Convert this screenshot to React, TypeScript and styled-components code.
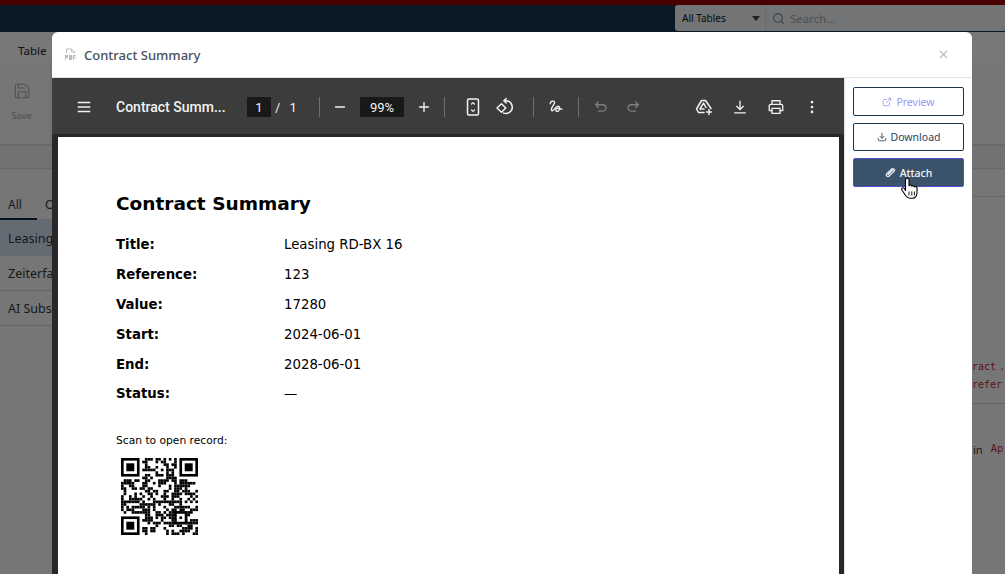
import React, { FC } from 'react';
import styled, { createGlobalStyle } from 'styled-components';
import { ExternalLink, Download, Search, Save, X } from 'lucide-react';

const GlobalStyle = createGlobalStyle`
    html, body {
        margin: 0;
        padding: 0;
        background: #fff;
    }
    * {
        box-sizing: border-box;
    }
`;

const UI_FONT = `"Noto Sans", "Open Sans", sans-serif`;

const Page = styled.div`
    position: relative;
    width: 1005px;
    height: 574px;
    overflow: hidden;
    font-family: ${UI_FONT};
    background: #fbfbfb;
    color: #1d2733;
`;

// Application behind the dialog
const AlertStripe = styled.div`
    height: 5px;
    background: #9c0000;
`;

const NavBar = styled.div`
    height: 27px;
    background: #153650;
    display: flex;
    justify-content: flex-end;
`;

const SearchGroup = styled.div`
    width: 330px;
    height: 26px;
    background: #f2f7fb;
    border-radius: 3px 0 0 3px;
    display: flex;
    align-items: center;
`;

const TableSelect = styled.div`
    width: 91px;
    height: 100%;
    padding: 0 5px 0 7px;
    display: flex;
    align-items: center;
    justify-content: space-between;
    font-size: 10px;
    border-right: 1px solid #dfe4e8;
    color: #101820;
`;

const Caret = styled.span`
    border-left: 4px solid transparent;
    border-right: 4px solid transparent;
    border-top: 5px solid #444;
`;

const SearchHint = styled.span`
    margin-left: 5px;
    font-size: 11.5px;
    color: #a3aab0;
`;

const SearchGlyph = styled.span`
    display: flex;
    margin-left: 6px;
    color: #7d858c;
`;

const MenuBar = styled.div`
    height: 30px;
    padding: 11px 18px 0;
    font-size: 11.5px;
    line-height: 16px;
    background: #fff;
`;

const Ribbon = styled.div`
    height: 84px;
    background: #fbfbfb;
    border-bottom: 2px solid #e2e2e2;
    display: flex;
`;

const RibbonButton = styled.div`
    width: 51px;
    padding: 20px 7px 0 0;
    border-right: 1px solid #e8e8e8;
    display: flex;
    flex-direction: column;
    align-items: center;
    gap: 9px;
    font-size: 9.5px;
    color: #a9a9a9;
`;

const FilterStrip = styled.div`
    height: 23px;
    background: #f2f2f2;
    border-bottom: 1px solid #dedede;
`;

const Workspace = styled.div`
    display: flex;
`;

const ListColumn = styled.div`
    width: 340px;
    padding-top: 23px;
`;

const TabRow = styled.div`
    display: flex;
    height: 28px;
    border-bottom: 1px solid #e2e2e2;
    font-size: 12px;
`;

const Tab = styled.div<{ $active?: boolean }>`
    width: 37px;
    padding: 4px 8px 0;
    color: #2b3a4a;
    border-bottom: ${(p) => (p.$active ? '2px solid #0f2a44' : 'none')};
    height: 28px;
`;

const ListRow = styled.div<{ $active?: boolean }>`
    height: ${(p) => (p.$active ? 36 : 35)}px;
    padding: 0 8px;
    display: flex;
    align-items: center;
    font-size: 12.5px;
    white-space: nowrap;
    background: ${(p) => (p.$active ? '#d5e4f4' : 'transparent')};
    border-bottom: ${(p) => (p.$active ? 'none' : '1px solid #d6d6d6')};
    color: #2c3742;
`;

const DetailColumn = styled.div`
    flex: 1;
    border-top: 1px solid #dcdcdc;
    margin-top: 27px;
    padding: 161px 0 0 632px;
    overflow: hidden;
    white-space: nowrap;
`;

const CodeLine = styled.div`
    height: 18px;
    font-family: "DejaVu Sans Mono", monospace;
    font-size: 10px;
    line-height: 18px;
    word-spacing: -3px;
    color: #c7254e;
`;

const DetailRule = styled.div`
    margin: 9px 0 38px -632px;
    border-top: 1px solid #d0d0d0;
`;

const InlineNote = styled.div`
    padding-left: 1px;
    font-size: 11px;
    color: #333;
    display: flex;
    gap: 8px;

    span {
        color: #c7254e;
        font-family: "DejaVu Sans Mono", monospace;
        font-size: 10.5px;
    }
`;

const Backdrop = styled.div`
    position: absolute;
    inset: 0;
    background: rgba(0, 0, 0, 0.53);
`;

// Dialog
const Dialog = styled.div`
    position: absolute;
    left: 52px;
    top: 32px;
    width: 920px;
    height: 542px;
    background: #fff;
    border-radius: 6px 6px 0 0;
    display: flex;
    flex-direction: column;
    overflow: hidden;
`;

const DialogHeader = styled.div`
    height: 46px;
    flex-shrink: 0;
    padding: 0 22px 0 13px;
    display: flex;
    align-items: center;
    border-bottom: 1px solid #dee2e6;
`;

const DialogTitle = styled.div`
    flex: 1;
    margin-left: 8px;
    font-size: 13px;
    font-weight: 500;
    color: #47505c;
`;

const CloseGlyph = styled.span`
    display: flex;
    color: #b4bac2;
`;

const DialogBody = styled.div`
    flex: 1;
    display: flex;
    min-height: 0;
`;

const Viewer = styled.div`
    width: 792px;
    background: #282828;
    display: flex;
    flex-direction: column;
`;

const Toolbar = styled.div`
    height: 56px;
    flex-shrink: 0;
    padding: 2px 0 0 16px;
    background: #3c3c3c;
    display: flex;
    align-items: center;
    color: #f1f1f1;
    font-family: Roboto, sans-serif;
`;

const ToolButton = styled.div<{ $width?: number; $dim?: boolean }>`
    width: ${(p) => p.$width ?? 32}px;
    height: 32px;
    flex-shrink: 0;
    display: flex;
    align-items: center;
    justify-content: center;
    color: ${(p) => (p.$dim ? '#7c7c7c' : '#f1f1f1')};
`;

const DocName = styled.div`
    width: 110px;
    margin: 0 21px 0 16px;
    font-size: 14px;
    font-weight: 500;
    white-space: nowrap;
`;

const NumberField = styled.div<{ $width: number }>`
    width: ${(p) => p.$width}px;
    height: 20px;
    background: #191919;
    display: flex;
    align-items: center;
    justify-content: center;
    font-size: 13px;
`;

const PageOf = styled.div`
    width: 48px;
    padding-left: 4px;
    display: flex;
    gap: 9px;
    font-size: 13px;
`;

const ToolDivider = styled.div<{ $left?: number; $right?: number }>`
    width: 1px;
    height: 20px;
    flex-shrink: 0;
    background: #6e6e6e;
    margin: 0 ${(p) => p.$right ?? 0}px 0 ${(p) => p.$left ?? 0}px;
`;

const ToolSpacer = styled.div`
    flex: 1;
`;

const Sheet = styled.div`
    flex: 1;
    margin: 3px 5px 0 6px;
    padding: 55px 58px 0;
    background: #fff;
    color: #000;
    font-family: "DejaVu Sans", sans-serif;
`;

const SheetTitle = styled.div`
    font-size: 18.5px;
    font-weight: 700;
    line-height: 24px;
    margin-bottom: 20px;
`;

const FieldRow = styled.div`
    display: grid;
    grid-template-columns: 168px 1fr;
    height: 29.9px;
    font-size: 13.3px;
    line-height: 18px;

    b {
        font-weight: 700;
    }
`;

const ScanLabel = styled.div`
    margin-top: 19px;
    font-size: 10.7px;
    line-height: 14px;
`;

const QrBox = styled.div`
    margin: 10px 0 0 5px;
    width: 77px;
    height: 77px;
    filter: blur(0.35px);
`;

const ActionColumn = styled.div`
    flex: 1;
    padding: 9px 8px 0;
    border-left: 1px solid #dee2e6;
    display: flex;
    flex-direction: column;
    gap: 7px;
`;

const ActionButton = styled.div<{ $variant: 'muted' | 'outline' | 'solid'; $height: number }>`
    height: ${(p) => p.$height}px;
    border-radius: 2px;
    border: 1px solid ${(p) => (p.$variant === 'solid' ? '#4f4fd0' : '#1a3350')};
    background: ${(p) => (p.$variant === 'solid' ? '#3a536b' : '#fff')};
    color: ${(p) =>
        p.$variant === 'muted' ? '#9a97f2' : p.$variant === 'solid' ? '#f4f6f8' : '#2b4560'};
    display: flex;
    align-items: center;
    justify-content: center;
    gap: 4px;
    font-size: 10.5px;
    font-weight: ${(p) => (p.$variant === 'solid' ? 500 : 400)};
`;

const HandCursor = styled.svg`
    position: absolute;
    left: 901px;
    top: 177px;
`;

const FieldData: [string, string][] = [
    ['Title:', 'Leasing RD-BX 16'],
    ['Reference:', '123'],
    ['Value:', '17280'],
    ['Start:', '2024-06-01'],
    ['End:', '2028-06-01'],
    ['Status:', '—'],
];

const PdfGlyph: FC = () => (
    <svg width="11" height="13" viewBox="0 0 11 13" fill="none">
        <path d="M1.5 5V1h5l3 3v1" stroke="#b5b9be" strokeWidth="1" />
        <path d="M6.5 1v3h3" stroke="#b5b9be" strokeWidth="0.8" />
        <path d="M0 7h3v3H1v2H0zM4 7h2.5l.8 1v3l-.8 1H4zM8 7h3v1.2H9v1h2v1H9V12H8z" fill="#b8bcc1" />
    </svg>
);

const TIcon: FC<{ children: React.ReactNode; size?: number }> = ({ children, size = 18 }) => (
    <svg width={size} height={size} viewBox="0 0 20 20" fill="none" stroke="currentColor" strokeWidth="1.5" strokeLinecap="round" strokeLinejoin="round">
        {children}
    </svg>
);

const PaperClip: FC = () => (
    <svg width="11" height="11" viewBox="0 0 12 12" fill="none" stroke="#dfe3e7" strokeWidth="1.4" strokeLinecap="round">
        <path d="M7.8 1.6 2 7.4a1.8 1.8 0 0 0 2.600 2.600l5.600-5.700a1.100 1.100 0 0 0-1.700-1.600L3.600 7.600" />
        <path d="M9.600 2.200 3.400 8.600" />
    </svg>
);

// Not a scannable code, just the look of one
const QrCode: FC = () => {
    const n = 29;
    const cells: React.ReactNode[] = [];
    const inFinder = (x: number, y: number) =>
        (x < 8 && y < 8) || (x > n - 9 && y < 8) || (x < 8 && y > n - 9);
    const finder = (ox: number, oy: number) => (
        <g key={`${ox}-${oy}`}>
            <rect x={ox} y={oy} width="7" height="7" />
            <rect x={ox + 1} y={oy + 1} width="5" height="5" fill="#fff" />
            <rect x={ox + 2} y={oy + 2} width="3" height="3" />
        </g>
    );
    for (let y = 0; y < n; y++) {
        for (let x = 0; x < n; x++) {
            if (inFinder(x, y)) continue;
            const h = Math.sin(x * 12.9898 + y * 78.233 + x * y * 0.37) * 43758.5453;
            if (h - Math.floor(h) > 0.48) {
                cells.push(<rect key={`${x}.${y}`} x={x} y={y} width="1" height="1" />);
            }
        }
    }
    return (
        <svg width="77" height="77" viewBox="0 0 29 29" fill="#000">
            {cells}
            {finder(0, 0)}
            {finder(22, 0)}
            {finder(0, 22)}
            <rect x="20" y="20" width="5" height="5" />
            <rect x="21" y="21" width="3" height="3" fill="#fff" />
            <rect x="22" y="22" width="1" height="1" />
        </svg>
    );
};

export default function App() {
    return (
        <Page>
            <GlobalStyle />
            <AlertStripe />
            <NavBar>
                <SearchGroup>
                    <TableSelect>
                        All Tables
                        <Caret />
                    </TableSelect>
                    <SearchGlyph>
                        <Search size={13} />
                    </SearchGlyph>
                    <SearchHint>Search...</SearchHint>
                </SearchGroup>
            </NavBar>
            <MenuBar>Table</MenuBar>
            <Ribbon>
                <RibbonButton>
                    <Save size={18} strokeWidth={1.5} />
                    Save
                </RibbonButton>
            </Ribbon>
            <FilterStrip />
            <Workspace>
                <ListColumn>
                    <TabRow>
                        <Tab $active>All</Tab>
                        <Tab>Open</Tab>
                    </TabRow>
                    <ListRow $active>Leasing RD-BX 16</ListRow>
                    <ListRow>Zeiterfassung</ListRow>
                    <ListRow>AI Subscription</ListRow>
                </ListColumn>
                <DetailColumn>
                    <CodeLine>ract .</CodeLine>
                    <CodeLine>refer</CodeLine>
                    <DetailRule />
                    <InlineNote>
                        in <span>Ap</span>
                    </InlineNote>
                </DetailColumn>
            </Workspace>
            <Backdrop />
            <Dialog>
                <DialogHeader>
                    <PdfGlyph />
                    <DialogTitle>Contract Summary</DialogTitle>
                    <CloseGlyph>
                        <X size={13} />
                    </CloseGlyph>
                </DialogHeader>
                <DialogBody>
                    <Viewer>
                        <Toolbar>
                            <ToolButton>
                                <TIcon>
                                    <path d="M3 5h14M3 10h14M3 15h14" strokeLinecap="butt" />
                                </TIcon>
                            </ToolButton>
                            <DocName>Contract Summ...</DocName>
                            <NumberField $width={24}>1</NumberField>
                            <PageOf>
                                <span>/</span>
                                <span>1</span>
                            </PageOf>
                            <ToolDivider $right={4} />
                            <ToolButton>
                                <TIcon>
                                    <path d="M4.5 10h11" strokeLinecap="butt" />
                                </TIcon>
                            </ToolButton>
                            <ToolButton $width={4} />
                            <NumberField $width={44}>99%</NumberField>
                            <ToolButton $width={4} />
                            <ToolButton>
                                <TIcon>
                                    <path d="M4.5 10h11M10 4.5v11" strokeLinecap="butt" />
                                </TIcon>
                            </ToolButton>
                            <ToolDivider $left={4} $right={12} />
                            <ToolButton>
                                <TIcon size={20}>
                                    <rect x="4.500" y="2" width="11" height="16" rx="1.500" />
                                    <path d="M8.500 7 10 5.600 11.500 7M8.500 13l1.500 1.400L11.500 13" strokeWidth="1.200" />
                                </TIcon>
                            </ToolButton>
                            <ToolButton>
                                <TIcon size={20}>
                                    <path d="M2 11 6.500 6.800 10.800 11 6.500 15.300z" />
                                    <path d="M9 3.800h2a6.300 6.300 0 0 1 3 11.800 6.300 6.300 0 0 1-5.500.500" />
                                    <path d="M11.200 1.500 9 3.800l2.200 2.200" />
                                </TIcon>
                            </ToolButton>
                            <ToolDivider $left={12} $right={6} />
                            <ToolButton>
                                <TIcon>
                                    <path d="M3.500 6.500c0-3 4-4 5-2s-5 6-3.500 9 4.500-4.500 7-4.500 3 4.500.500 5.500-3.500-1-2-2.500 4 0 6 .500" />
                                </TIcon>
                            </ToolButton>
                            <ToolDivider $left={6} $right={6} />
                            <ToolButton $dim>
                                <TIcon>
                                    <path d="M7 4.500 4 7.500l3 3M4 7.500h8a3.500 3.500 0 0 1 0 7H7" />
                                </TIcon>
                            </ToolButton>
                            <ToolButton $dim>
                                <TIcon>
                                    <path d="M13 4.500l3 3-3 3M16 7.500H8a3.500 3.500 0 0 0 0 7h5" />
                                </TIcon>
                            </ToolButton>
                            <ToolSpacer />
                            <ToolButton $width={36}>
                                <TIcon size={20}>
                                    <path d="M7.500 3.500h4l5.500 8M7.500 3.500 2.500 12l2 3.500H10M7.500 9.500l2-3.500 2.500 4.500M7.500 9.500 6 12h4" />
                                    <path d="M15 12.500v5M12.500 15h5" />
                                </TIcon>
                            </ToolButton>
                            <ToolButton $width={36}>
                                <TIcon>
                                    <path d="M10 3v9.500M6 8.800l4 4 4-4M3.500 16.500h13" strokeLinecap="butt" />
                                </TIcon>
                            </ToolButton>
                            <ToolButton $width={36}>
                                <TIcon>
                                    <path d="M5.500 7V3h9v4M5.500 14H2.500V9a2 2 0 0 1 2-2h11a2 2 0 0 1 2 2v5h-3" />
                                    <rect x="5.500" y="11.500" width="9" height="5.500" />
                                </TIcon>
                            </ToolButton>
                            <ToolButton $width={36}>
                                <svg width="18" height="18" viewBox="0 0 20 20" fill="currentColor">
                                    <circle cx="10" cy="4.500" r="1.500" />
                                    <circle cx="10" cy="10" r="1.500" />
                                    <circle cx="10" cy="15.500" r="1.500" />
                                </svg>
                            </ToolButton>
                            <ToolButton $width={14} />
                        </Toolbar>
                        <Sheet>
                            <SheetTitle>Contract Summary</SheetTitle>
                            {FieldData.map(([label, value]) => (
                                <FieldRow key={label}>
                                    <b>{label}</b>
                                    <span>{value}</span>
                                </FieldRow>
                            ))}
                            <ScanLabel>Scan to open record:</ScanLabel>
                            <QrBox>
                                <QrCode />
                            </QrBox>
                        </Sheet>
                    </Viewer>
                    <ActionColumn>
                        <ActionButton $variant="muted" $height={29}>
                            <ExternalLink size={10} /> Preview
                        </ActionButton>
                        <ActionButton $variant="outline" $height={28}>
                            <Download size={10} /> Download
                        </ActionButton>
                        <ActionButton $variant="solid" $height={29}>
                            <PaperClip /> Attach
                        </ActionButton>
                    </ActionColumn>
                </DialogBody>
            </Dialog>
            <HandCursor width="18" height="24" viewBox="0 0 18 24">
                <path
                    d="M4.500 2.800c0-2 3.500-2 3.500 0v6c.5-1.200 2.700-1 2.800.5.500-1 2.500-.8 2.600.7.600-.8 2.600-.5 2.600 1v4.300c0 3.300-1.700 6-4.800 6H9c-2 0-3.200-1-4.200-2.500L.9 13c-1-1.800 1.300-3 2.500-1.500l1.100 2z"
                    fill="#fff"
                    stroke="#000"
                    strokeWidth="1.100"
                    strokeLinejoin="round"
                />
                <path d="M8 14.500v4M10.800 14.500v4M13.400 14.500v4" stroke="#000" strokeWidth="0.900" />
            </HandCursor>
        </Page>
    );
}
